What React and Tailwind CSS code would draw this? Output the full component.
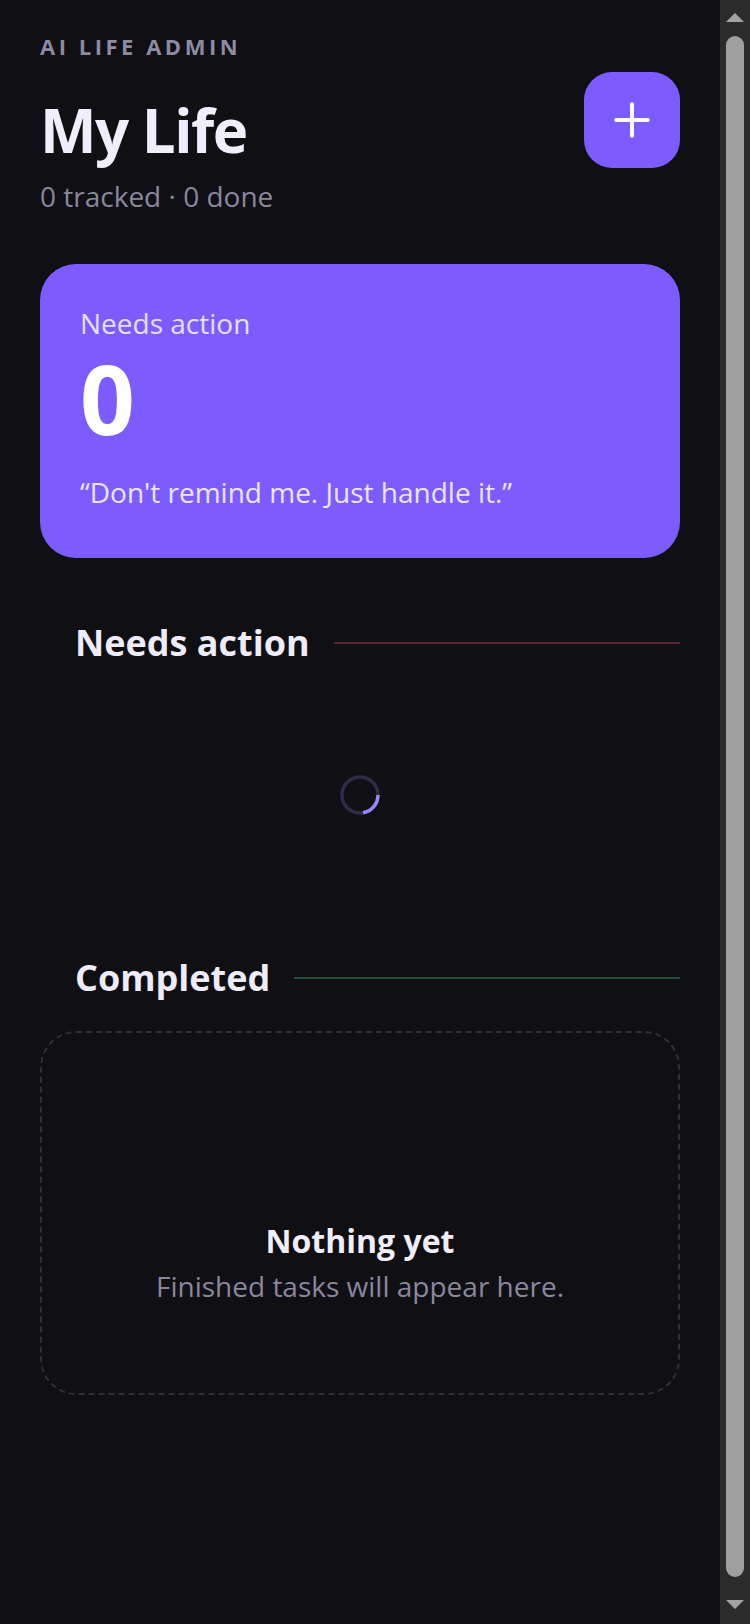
import { Plus } from "lucide-react";

function SectionHeading({ title, lineColor }) {
  return (
    <div className="flex items-center gap-6 pl-[35px]">
      <h2 className="text-[36px] leading-[54px] font-bold text-[#eeecf8]">{title}</h2>
      <div className={`h-[2px] flex-1 ${lineColor}`} />
    </div>
  );
}

function Spinner() {
  return (
    <svg width="40" height="40" viewBox="0 0 40 40" fill="none">
      <circle cx="20" cy="20" r="18" stroke="#302b47" strokeWidth="3.5" />
      <path d="M38 20 A18 18 0 0 1 23.1 37.7" stroke="#9c86ff" strokeWidth="3.5" />
    </svg>
  );
}

function ScrollBar() {
  return (
    <aside className="flex w-[30px] shrink-0 flex-col items-center bg-[#2b2b2b] pt-[13px] pb-[15px]">
      <svg width="18" height="9" viewBox="0 0 18 9">
        <polygon points="9,0 18,9 0,9" fill="#a3a3a3" />
      </svg>
      <div className="mt-[14px] mb-[23px] w-[18px] flex-1 rounded-full bg-[#9f9f9f]" />
      <svg width="18" height="9" viewBox="0 0 18 9">
        <polygon points="0,0 18,0 9,9" fill="#a3a3a3" />
      </svg>
    </aside>
  );
}

export default function App() {
  return (
    <div className="flex h-screen overflow-hidden bg-[#100f14] font-['Open_Sans',sans-serif] text-[#f0eefa]">
      <main className="flex-1 px-10 pt-[30px]">
        {/* HEADER */}
        <header className="flex items-start justify-between">
          <div>
            <p className="text-[22px] leading-[33px] font-bold tracking-[0.16em] text-[#8d8aa3]">
              AI LIFE ADMIN
            </p>
            <h1 className="mt-[37px] text-[60px] leading-[60px] font-bold tracking-tight text-[#f0eefa]">
              My Life
            </h1>
            <p className="mt-[15px] text-[28px] leading-[42px] text-[#8a879d]">
              0 tracked · 0 done
            </p>
          </div>
          <button className="mt-[42px] flex h-24 w-24 items-center justify-center rounded-[28px] bg-[#7c5cff] text-white">
            <Plus size={54} strokeWidth={1.75} />
          </button>
        </header>

        {/* SUMMARY CARD */}
        <section className="mt-[47px] rounded-[36px] bg-[#7c5cff] px-10 pt-[38px] pb-[45px]">
          <p className="text-[28px] leading-[42px] text-[#e6e0ff]">Needs action</p>
          <p className="mt-[6px] text-[96px] leading-[96px] font-bold text-white">0</p>
          <p className="mt-[25px] text-[28px] leading-[42px] text-[#ebe6ff]">
            “Don't remind me. Just handle it.”
          </p>
        </section>

        {/* NEEDS ACTION */}
        <div className="mt-[58px]">
          <SectionHeading title="Needs action" lineColor="bg-[#5a2329]" />
          <div className="mt-[105px] mb-[136px] flex h-10 justify-center">
            <Spinner />
          </div>
        </div>

        {/* COMPLETED */}
        <SectionHeading title="Completed" lineColor="bg-[#23503a]" />
        <div className="mt-[26px] flex flex-col items-center rounded-[36px] border-2 border-dashed border-[#302e39] pt-[184px] pb-[86px] text-center">
          <p className="text-[32px] leading-[48px] font-bold text-[#f0eefa]">Nothing yet</p>
          <p className="text-[28px] leading-[42px] text-[#8a879d]">Finished tasks will appear here.</p>
        </div>
      </main>
      <ScrollBar />
    </div>
  );
}
